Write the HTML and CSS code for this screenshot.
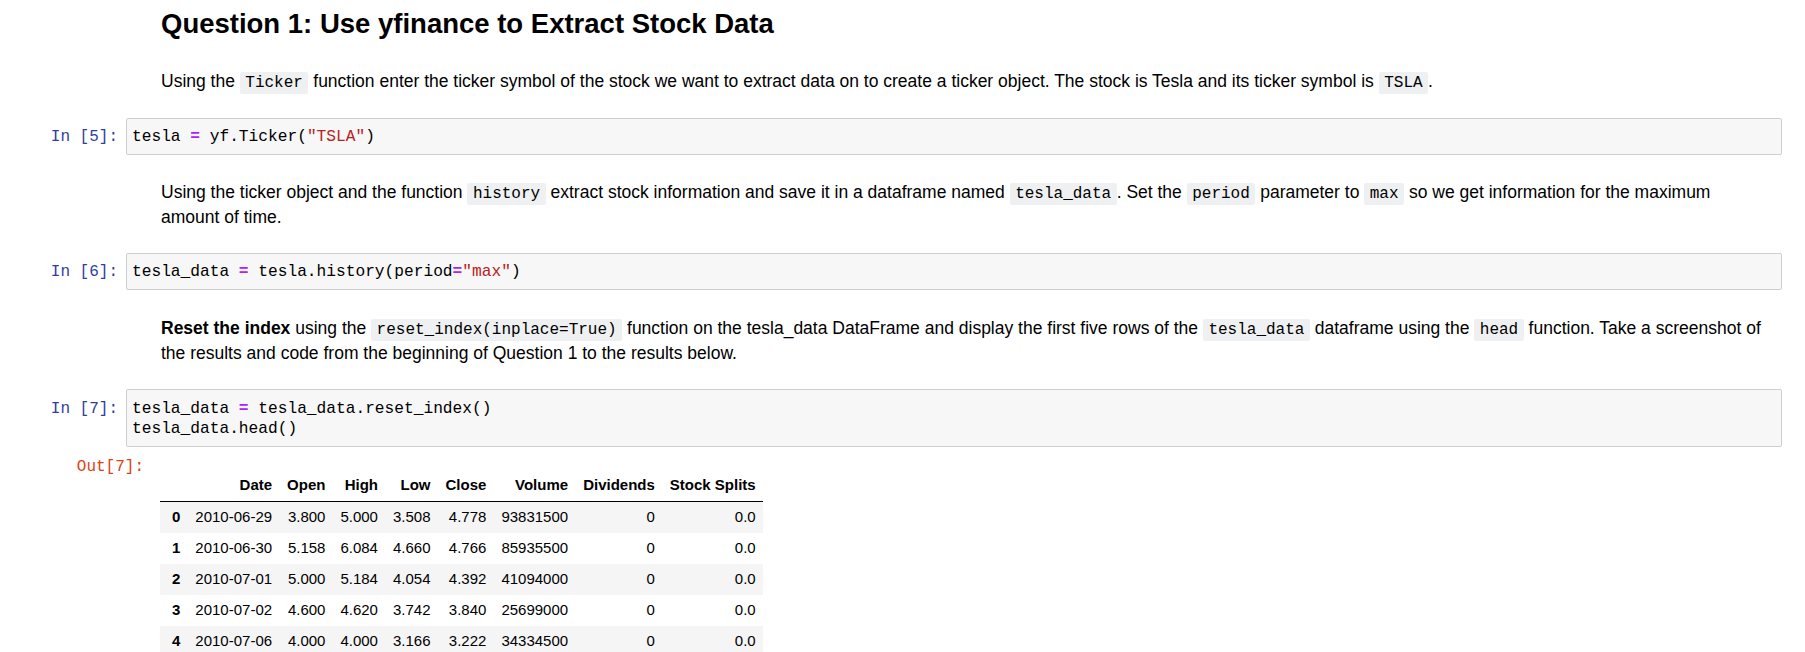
FILE: index.html
```html
<!DOCTYPE html>
<html>
<head>
<meta charset="utf-8">
<link rel="stylesheet" href="styles.css">
</head>
<body>
<div class="notebook">
  <div class="cell text-cell first">
    <div class="prompt"></div>
    <div class="text-content">
      <h2 class="heading">Question 1: Use yfinance to Extract Stock Data</h2>
      <p class="para">Using the <code class="inline">Ticker</code> function enter the ticker symbol of the stock we want to extract data on to create a ticker object. The stock is Tesla and its ticker symbol is <code class="inline">TSLA</code>.</p>
    </div>
  </div>

  <div class="cell code-cell">
    <div class="prompt in-prompt">In&nbsp;[5]:</div>
    <div class="input"><pre class="code">tesla <span class="op">=</span> yf.Ticker(<span class="str">"TSLA"</span>)</pre></div>
  </div>

  <div class="cell text-cell second">
    <div class="prompt"></div>
    <div class="text-content">
      <p class="para">Using the ticker object and the function <code class="inline">history</code> extract stock information and save it in a dataframe named <code class="inline">tesla_data</code>. Set the <code class="inline">period</code> parameter to <code class="inline">max</code> so we get information for the maximum amount of time.</p>
    </div>
  </div>

  <div class="cell code-cell">
    <div class="prompt in-prompt">In&nbsp;[6]:</div>
    <div class="input"><pre class="code">tesla_data <span class="op">=</span> tesla.history(period<span class="op">=</span><span class="str">"max"</span>)</pre></div>
  </div>

  <div class="cell text-cell third">
    <div class="prompt"></div>
    <div class="text-content">
      <p class="para"><b>Reset the index</b> using the <code class="inline">reset_index(inplace=True)</code> function on the tesla_data DataFrame and display the first five rows of the <code class="inline">tesla_data</code> dataframe using the <code class="inline">head</code> function. Take a screenshot of the results and code from the beginning of Question 1 to the results below.</p>
    </div>
  </div>

  <div class="cell code-cell">
    <div class="prompt in-prompt">In&nbsp;[7]:</div>
    <div class="input"><pre class="code">tesla_data <span class="op">=</span> tesla_data.reset_index()
tesla_data.head()</pre></div>
  </div>

  <div class="output">
    <div class="out-prompt">Out[7]:</div>
    <table class="dataframe">
      <thead>
        <tr><th class="idx"></th><th>Date</th><th>Open</th><th>High</th><th>Low</th><th>Close</th><th>Volume</th><th>Dividends</th><th>Stock Splits</th></tr>
      </thead>
      <tbody>
        <tr><th class="idx">0</th><td>2010-06-29</td><td>3.800</td><td>5.000</td><td>3.508</td><td>4.778</td><td>93831500</td><td>0</td><td>0.0</td></tr>
        <tr><th class="idx">1</th><td>2010-06-30</td><td>5.158</td><td>6.084</td><td>4.660</td><td>4.766</td><td>85935500</td><td>0</td><td>0.0</td></tr>
        <tr><th class="idx">2</th><td>2010-07-01</td><td>5.000</td><td>5.184</td><td>4.054</td><td>4.392</td><td>41094000</td><td>0</td><td>0.0</td></tr>
        <tr><th class="idx">3</th><td>2010-07-02</td><td>4.600</td><td>4.620</td><td>3.742</td><td>3.840</td><td>25699000</td><td>0</td><td>0.0</td></tr>
        <tr><th class="idx">4</th><td>2010-07-06</td><td>4.000</td><td>4.000</td><td>3.166</td><td>3.222</td><td>34334500</td><td>0</td><td>0.0</td></tr>
      </tbody>
    </table>
  </div>
</div>
</body>
</html>
```

FILE: styles.css
```css
html, body {
  margin: 0;
  padding: 0;
  background: #ffffff;
  color: #000000;
  font-family: "Liberation Sans", Arial, sans-serif;
}

.notebook {
  padding: 10px 23px 0 0;
}

.cell {
  display: flex;
  align-items: flex-start;
}

.prompt {
  flex: none;
  width: 126px;
  box-sizing: border-box;
  padding-right: 8px;
  text-align: right;
  font-family: "Liberation Mono", monospace;
  font-size: 16px;
  line-height: 20.5px;
}

.in-prompt {
  color: #303F9F;
  padding-top: 9.5px;
}

.text-cell.first {
  padding-bottom: 24.3px;
}

.text-cell.second {
  padding: 24.8px 0 23.2px 0;
}

.text-cell.third {
  padding: 25.8px 0 23.7px 0;
}

.text-content {
  flex: 1;
  min-width: 0;
  padding-left: 35px;
  padding-right: 14px;
}

.heading {
  margin: 0 0 31.2px 0;
  font-size: 27.5px;
  line-height: 27.5px;
  font-weight: bold;
}

.para {
  margin: 0;
  font-size: 17.5px;
  line-height: 25px;
}

.inline {
  font-family: "Liberation Mono", monospace;
  font-size: 16px;
  line-height: 1;
  background: #eff0f1;
  padding: 2px 5.5px;
  border-radius: 2px;
  color: #000;
}

.input {
  flex: 1;
  min-width: 0;
  background: #f7f7f7;
  border: 1px solid #cfcfcf;
  border-radius: 2px;
}

.code {
  margin: 0;
  padding: 8.5px 5px 6px 5px;
  font-family: "Liberation Mono", monospace;
  font-size: 16.2px;
  line-height: 20.5px;
  color: #000;
  white-space: pre;
}

.op {
  color: #AA22FF;
  font-weight: bold;
}

.str {
  color: #BA2121;
}

.output {
  display: flex;
  align-items: flex-start;
}

.out-prompt {
  flex: none;
  width: 150px;
  box-sizing: border-box;
  padding-right: 6px;
  padding-top: 10.5px;
  text-align: right;
  color: #D84315;
  font-family: "Liberation Mono", monospace;
  font-size: 16px;
  line-height: 20.5px;
}

.dataframe {
  margin: 23px 0 0 10px;
  border-collapse: collapse;
  border-spacing: 0;
  font-size: 15px;
  line-height: 16px;
  color: #000;
}

.dataframe th,
.dataframe td {
  padding: 7.5px;
  text-align: right;
  vertical-align: middle;
  white-space: nowrap;
}

.dataframe th {
  font-weight: bold;
}

.dataframe th.idx {
  padding-left: 12px;
}

.dataframe thead th {
  border-bottom: 1px solid #000;
}

.dataframe tbody tr:nth-child(odd) {
  background: #f5f5f5;
}
```
